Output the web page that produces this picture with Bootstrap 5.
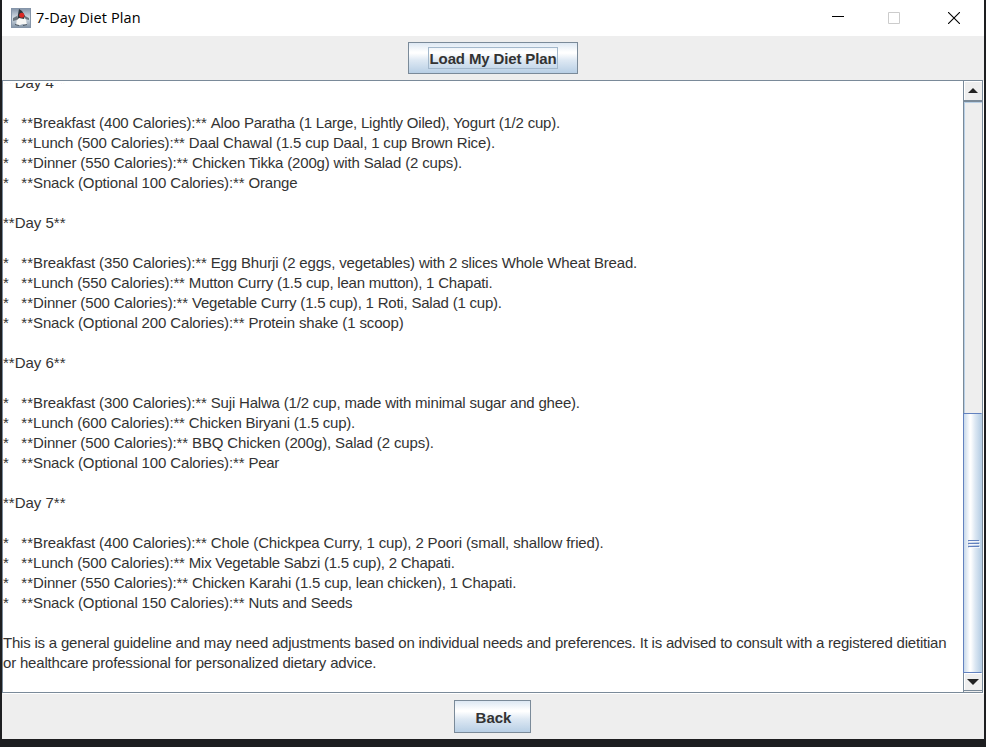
<!DOCTYPE html>
<html lang="en">
<head>
<meta charset="utf-8">
<meta name="viewport" content="width=device-width, initial-scale=1">
<title>7-Day Diet Plan</title>
<link href="https://cdn.jsdelivr.net/npm/bootstrap@5.3.0/dist/css/bootstrap.min.css" rel="stylesheet">
<style>
  body { background: #1d1e20; font-family: "Liberation Sans", Arial, sans-serif; font-size: 15px; color: #333; }
  .app-window { width: 982px; height: 739px; margin-left: 2px; background: #eee; }
  .title-bar { height: 36px; background: #fff; padding-left: 9px; padding-right: 1px; }
  .title-text { font-family: "Open Sans", "Noto Sans", sans-serif; font-size: 14.5px; color: #000; margin-left: 5px; line-height: 20px; letter-spacing: .1px; }
  .win-control { width: 58px; height: 36px; }
  .top-panel { height: 44px; }
  .bottom-panel { height: 46px; padding-top: 7px; padding-right: 1px; }
  .metal-btn { --bs-btn-padding-x: 0; --bs-btn-padding-y: 0; border: 1px solid #7a8a99; border-radius: 0; color: #333; font-weight: 700; font-size: 15px; line-height: 20px;
    background: linear-gradient(#dde8f3 0, #fff 30%, #fff 34%, #dde8f3 58%, #b8cfe5 100%); }
  .load-btn { width: 170px; height: 32px; letter-spacing: -.14px; }
  .back-btn { width: 77px; height: 33px; padding: 2px 0 0 2px; }
  .focus-box { width: 130px; height: 22px; border: 1px solid #a3b8cc; padding-top: 1px; }
  .scroll-frame { height: 613px; border: 1px solid #7a8a99; margin-right: 1px; background: #fff; box-shadow: 1px 1px #fff; }
  .plan-text { width: 960px; line-height: 20px; font-size: 15px; border-top: 2px solid #fff; }
  .plan-text pre { font: inherit; color: inherit; margin: -10px 0 0; white-space: pre; overflow: visible; }
  .plan-text b { font-weight: 400; letter-spacing: -.143px; }
  .fit-a { letter-spacing: -.14px; }
  .fit-b { letter-spacing: -.165px; }
  .fit-c { letter-spacing: -.187px; }
  .fit-d { letter-spacing: -.212px; }
  .fit-e { letter-spacing: -.25px; }
  .metal-scroll { width: 19px; border-left: 1px solid #7a8a99; background: #eee; }
  .arrow-up, .arrow-down { border-bottom: 1px solid #7a8a99; box-shadow: inset 1px 1px #fff; }
  .arrow-up { height: 20px; }
  .arrow-down { height: 18px; }
  .scroll-track { height: 312px; border-top: 1px solid #7a8a99; box-shadow: inset 1px 1px #b8cfe5; }
  .scroll-thumb { height: 260px; border: 1px solid #6382bf; margin-left: -1px; border-right: 1px solid #b8cfe5; padding: 2px 0 0 2px;
    background: linear-gradient(90deg, #c8d9eb 0, #fff 35%, #fff 40%, #dde8f3 65%, #b8cfe5 100%); }
</style>
</head>
<body class="overflow-hidden">
<main class="app-window d-flex flex-column">
  <header class="title-bar d-flex align-items-center">
    <svg width="20" height="20" viewBox="0 0 20 20" aria-hidden="true">
      <defs><linearGradient id="tile" x2="0" y2="1"><stop stop-color="#8494a8"/><stop offset=".5" stop-color="#d5dee6"/><stop offset="1" stop-color="#8293a6"/></linearGradient></defs>
      <rect x=".5" y=".5" width="19" height="19" fill="url(#tile)" stroke="#8595a9"/>
      <path d="M6 8L2 10v3l4-1zM14 8l4 2v2l-4-1z" fill="#69747d"/>
      <path d="M5 17l1-6 2-3h5l2 4 1 5-4-1-3 1z" fill="#f7f7f5"/>
      <path d="M8 1l3 2 3 5-1 3-5-1-2 2z" fill="#30353a"/>
      <path d="M4 16.5l4 1M12 17.5l4-1" stroke="#4b5660"/>
      <circle cx="10.8" cy="7.2" r="2.5" fill="#dc2824"/>
    </svg>
    <span class="title-text">7-Day Diet Plan</span>
    <div class="d-flex ms-auto">
      <span class="win-control d-flex align-items-center justify-content-center"><svg width="12" height="12"><path d="M0 4.5h12" stroke="#000"/></svg></span>
      <span class="win-control d-flex align-items-center justify-content-center pe-1"><svg width="12" height="12"><path d="M.5.5h11v11H.5z" fill="none" stroke="#ccc"/></svg></span>
      <span class="win-control d-flex align-items-center justify-content-center"><svg width="12" height="12"><path d="M0 0l12 12M12 0L0 12" stroke="#000" stroke-width="1.1"/></svg></span>
    </div>
  </header>
  <section class="top-panel d-flex align-items-center justify-content-center">
    <button class="btn metal-btn load-btn d-flex align-items-center justify-content-center"><span class="focus-box d-flex align-items-center justify-content-center text-nowrap">Load My Diet Plan</span></button>
  </section>
  <section class="scroll-frame d-flex">
    <div class="plan-text overflow-hidden flex-shrink-0"><pre>**Day 4**

*   **<b>Breakfast (400 Calories):** </b><span class="fit-d">Aloo Paratha (1 Large, Lightly Oiled), Yogurt (1/2 cup).</span>
*   **<b>Lunch (500 Calories):** </b><span class="fit-b">Daal Chawal (1.5 cup Daal, 1 cup Brown Rice).</span>
*   **<b>Dinner (550 Calories):** </b><span class="fit-b">Chicken Tikka (200g) with Salad (2 cups).</span>
*   **<b>Snack (Optional 100 Calories):** </b><span class="fit-b">Orange</span>

**Day 5**

*   **<b>Breakfast (350 Calories):** </b><span class="fit-b">Egg Bhurji (2 eggs, vegetables) with 2 slices Whole Wheat Bread.</span>
*   **<b>Lunch (550 Calories):** </b><span class="fit-d">Mutton Curry (1.5 cup, lean mutton), 1 Chapati.</span>
*   **<b>Dinner (500 Calories):** </b><span class="fit-d">Vegetable Curry (1.5 cup), 1 Roti, Salad (1 cup).</span>
*   **<b>Snack (Optional 200 Calories):** </b><span class="fit-a">Protein shake (1 scoop)</span>

**Day 6**

*   **<b>Breakfast (300 Calories):** </b><span class="fit-c">Suji Halwa (1/2 cup, made with minimal sugar and ghee).</span>
*   **<b>Lunch (600 Calories):** </b><span class="fit-d">Chicken Biryani (1.5 cup).</span>
*   **<b>Dinner (500 Calories):** </b><span class="fit-a">BBQ Chicken (200g), Salad (2 cups).</span>
*   **<b>Snack (Optional 100 Calories):** </b><span class="fit-e">Pear</span>

**Day 7**

*   **<b>Breakfast (400 Calories):** </b><span class="fit-a">Chole (Chickpea Curry, 1 cup), 2 Poori (small, shallow fried).</span>
*   **<b>Lunch (500 Calories):** </b><span class="fit-e">Mix Vegetable Sabzi (1.5 cup), 2 Chapati.</span>
*   **<b>Dinner (550 Calories):** </b><span class="fit-c">Chicken Karahi (1.5 cup, lean chicken), 1 Chapati.</span>
*   **<b>Snack (Optional 150 Calories):** </b><span class="fit-d">Nuts and Seeds</span>

<span class="fit-d">This is a general guideline and may need adjustments based on individual needs and preferences. It is advised to consult with a registered dietitian</span>
<span class="fit-c">or healthcare professional for personalized dietary advice.</span>
</pre></div>
    <div class="metal-scroll d-flex flex-column">
      <div class="arrow-up d-flex align-items-center justify-content-center"><svg width="10" height="5"><path d="M0 5L5 0l5 5z" fill="#222"/></svg></div>
      <div class="scroll-track"></div>
      <div class="scroll-thumb d-flex align-items-center justify-content-center"><svg width="12" height="8"><path d="M0 .5h11M0 3.5h11M0 6.5h11" stroke="#6382bf" stroke-width="1.4"/><path d="M1 1.5h11M1 4.5h11M1 7.5h11" stroke="#fff" stroke-width=".8"/></svg></div>
      <div class="arrow-down d-flex align-items-center justify-content-center"><svg width="12" height="6"><path d="M0 0h12L6 6z" fill="#222"/></svg></div>
    </div>
  </section>
  <footer class="bottom-panel d-flex justify-content-center">
    <button class="btn metal-btn back-btn">Back</button>
  </footer>
</main>
<script src="https://cdn.jsdelivr.net/npm/bootstrap@5.3.0/dist/js/bootstrap.bundle.min.js"></script>
</body>
</html>
